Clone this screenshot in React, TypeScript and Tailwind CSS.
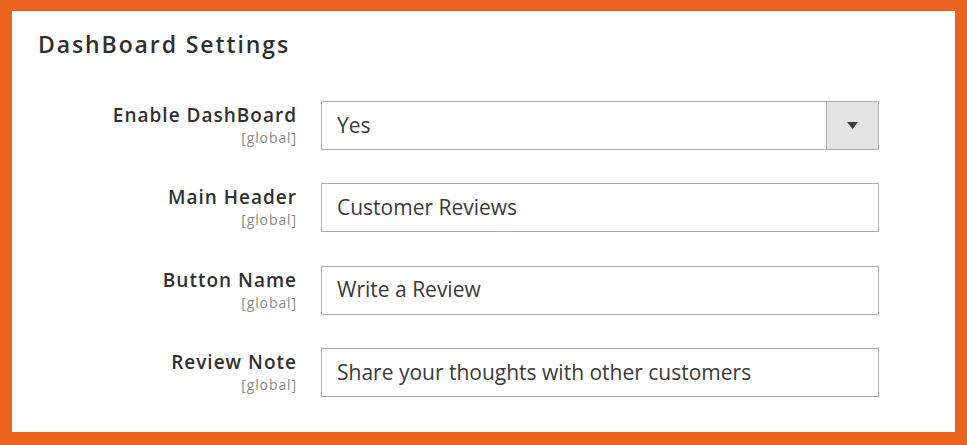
const fields = [
  { label: "Main Header", value: "Customer Reviews" },
  { label: "Button Name", value: "Write a Review" },
  { label: "Review Note", value: "Share your thoughts with other customers" },
];

function Label({ text }: { text: string }) {
  return (
    <div className="w-[285px] shrink-0 text-right">
      <div className="text-[19px] font-semibold leading-[28px] tracking-[1px] text-[#303030]">{text}</div>
      <div className="text-[14px] leading-[17px] tracking-[0.9px] text-[#8a8a8a]">[global]</div>
    </div>
  );
}

export default function App() {
  return (
    <div
      className="h-[445px] w-[967px] bg-[#ea631f] pb-[13px] pl-[12px] pr-[12px] pt-[11px]"
      style={{ fontFamily: '"Open Sans", sans-serif' }}
    >
      <div className="h-full bg-white">
        <h1 className="pl-[26px] pt-[18px] text-[23px] font-semibold leading-[30px] tracking-[1.9px] text-[#303030]">
          DashBoard Settings
        </h1>

        <div className="mt-[42px] flex flex-col gap-[33.3px]">
          <div className="flex gap-[24px]">
            <Label text="Enable DashBoard" />
            <div className="flex h-[49px] w-[558px] border border-[#adadad]">
              <div className="flex flex-1 items-center pl-[15px] text-[21px] text-[#3a3a3a]">Yes</div>
              <div className="flex w-[52px] items-center justify-center border-l border-[#adadad] bg-[#e3e3e3]">
                <svg width="11" height="7" viewBox="0 0 11 7">
                  <path d="M0 0H11L5.5 7Z" fill="#3d3d3d" />
                </svg>
              </div>
            </div>
          </div>

          {fields.map((f) => (
            <div key={f.label} className="flex gap-[24px]">
              <Label text={f.label} />
              <div className="flex h-[49px] w-[558px] items-center border border-[#adadad] pl-[15px] text-[21px] text-[#3a3a3a]">
                {f.value}
              </div>
            </div>
          ))}
        </div>
      </div>
    </div>
  );
}
